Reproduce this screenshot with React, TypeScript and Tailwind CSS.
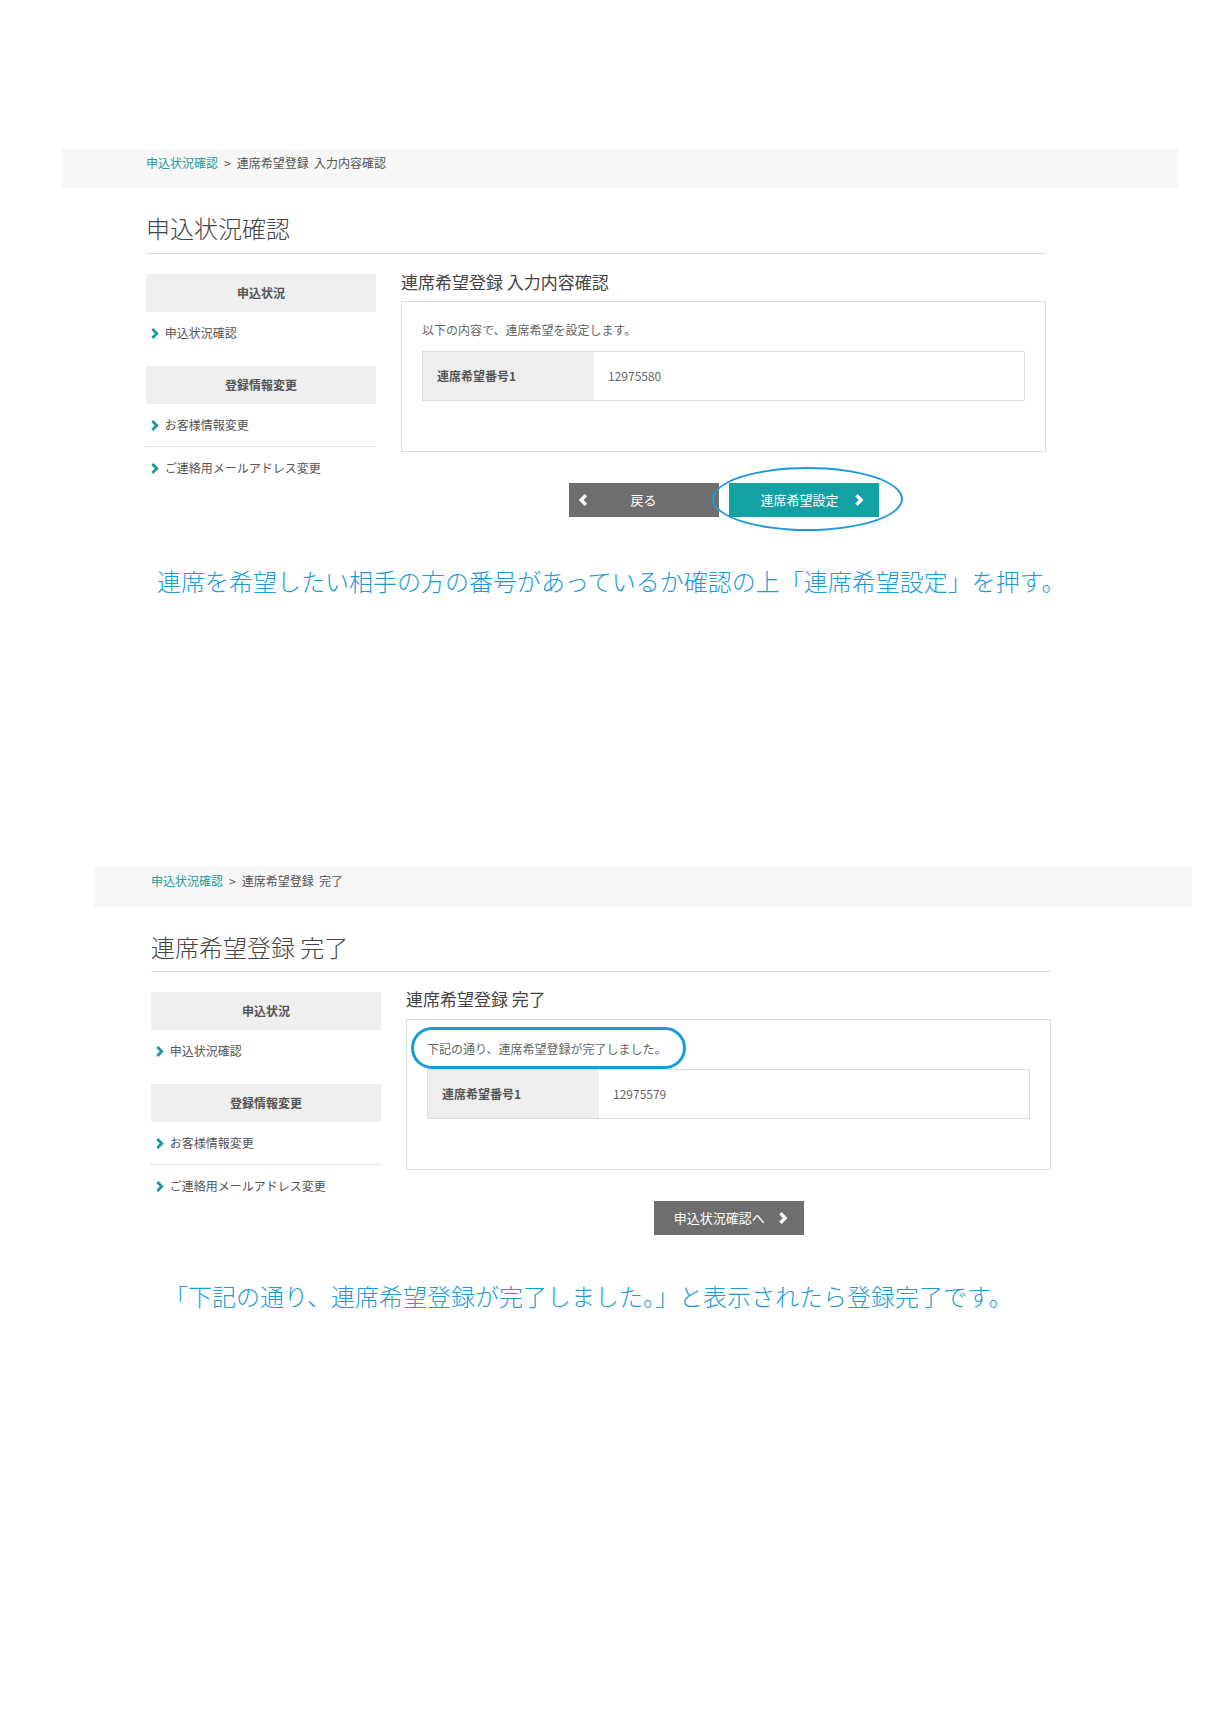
import React from "react";

const FONT = "font-['Noto_Sans_CJK_JP','Noto_Sans',sans-serif]";

function Chevron({ dir = "right", color = "#1a9a9a", size = 10, stroke = 2.4 }: { dir?: "left" | "right"; color?: string; size?: number; stroke?: number }) {
  return (
    <svg width={size * 0.7} height={size} viewBox="0 0 7 10" fill="none">
      {dir === "right" ? (
        <polyline points="1.2,1 5.2,5 1.2,9" stroke={color} strokeWidth={stroke} strokeLinejoin="miter" />
      ) : (
        <polyline points="5.8,1 1.8,5 5.8,9" stroke={color} strokeWidth={stroke} strokeLinejoin="miter" />
      )}
    </svg>
  );
}

function Sidebar() {
  return (
    <div className="w-[230px] shrink-0 pt-[20px] text-[12px] text-[#555]">
      <div className="h-[38px] bg-[#efefef] flex items-center justify-center font-bold text-[#555]">申込状況</div>
      <div className="h-[42px] flex items-center gap-[6px] pl-[5px]">
        <Chevron size={11} stroke={2.6} />
        <span>申込状況確認</span>
      </div>
      <div className="mt-[12px] h-[38px] bg-[#efefef] flex items-center justify-center font-bold text-[#555]">登録情報変更</div>
      <div className="h-[43px] flex items-center gap-[6px] pl-[5px] border-b border-dotted border-[#cfcfcf]">
        <Chevron size={11} stroke={2.6} />
        <span>お客様情報変更</span>
      </div>
      <div className="h-[42px] flex items-center gap-[6px] pl-[5px]">
        <Chevron size={11} stroke={2.6} />
        <span>ご連絡用メールアドレス変更</span>
      </div>
    </div>
  );
}

function InfoTable({ value }: { value: string }) {
  return (
    <div className="flex h-[50px] border border-[#dddddd] text-[12px]">
      <div className="w-[171px] bg-[#eeeeee] flex items-center pl-[14px] font-bold text-[#555]">連席希望番号1</div>
      <div className="flex-1 flex items-center pl-[14px] text-[#666]">{value}</div>
    </div>
  );
}

export default function App() {
  return (
    <div className={`w-[1225px] min-h-[1718px] bg-white ${FONT}`}>
      {/* Section 1 */}
      <div className="pt-[149px]">
        <div className="ml-[62px] w-[1116px] h-[39px] bg-[#f7f7f7] pl-[84px] pt-[5px] text-[12px] leading-[18px] text-[#555]">
          <span className="text-[#259b9b]">申込状況確認</span>
          <span className="mx-[6px]">&gt;</span>
          <span>連席希望登録&nbsp;&nbsp;入力内容確認</span>
        </div>
        <div className="ml-[146px] w-[900px]">
          <div className="mt-[24px] h-[42px] border-b border-[#dddddd] text-[24px] leading-[32px] text-[#444] font-light">申込状況確認</div>
          <div className="flex gap-[25px]">
            <Sidebar />
            <div className="flex-1 pt-[16px]">
              <div className="text-[17px] leading-[24px] text-[#444]">連席希望登録 入力内容確認</div>
              <div className="mt-[7px] border border-[#dddddd] px-[20px] pt-[19px] pb-[50px]">
                <div className="text-[12px] leading-[18px] text-[#666]">以下の内容で、連席希望を設定します。</div>
                <div className="mt-[12px]">
                  <InfoTable value="12975580" />
                </div>
              </div>
              <div className="mt-[31px] flex justify-center gap-[10px] text-[13px] text-white">
                <div className="w-[150px] h-[34px] bg-[#6e6e6e] grid grid-cols-[24px_1fr_24px] items-center">
                  <div className="pl-[10px] flex items-center">
                    <Chevron dir="left" color="#ffffff" size={12} stroke={2.8} />
                  </div>
                  <div className="text-center">戻る</div>
                  <div />
                </div>
                <div className="relative w-[150px] h-[34px] bg-[#14a1a3] grid grid-cols-[20px_1fr_28px] items-center">
                  <div />
                  <div className="text-center">連席希望設定</div>
                  <div className="flex items-center pl-[4px]">
                    <Chevron dir="right" color="#ffffff" size={12} stroke={2.8} />
                  </div>
                  <div className="absolute left-[-17px] top-[-16px] w-[191px] h-[64px] rounded-[50%] border-[2.5px] border-[#1b9ad8]" />
                </div>
              </div>
            </div>
          </div>
          <div className="mt-[48px] pl-[11px] text-[24px] leading-[32px] text-[#1b9ad8] font-light whitespace-nowrap">
            連席を希望したい相手の方の番号があっているか確認の上「連席希望設定」を押す。
          </div>
        </div>
      </div>

      {/* Section 2 */}
      <div className="mt-[269px]">
        <div className="ml-[94px] w-[1098px] h-[41px] bg-[#f7f7f7] pl-[57px] pt-[6px] text-[12px] leading-[18px] text-[#555]">
          <span className="text-[#259b9b]">申込状況確認</span>
          <span className="mx-[6px]">&gt;</span>
          <span>連席希望登録&nbsp;&nbsp;完了</span>
        </div>
        <div className="ml-[151px] w-[900px]">
          <div className="mt-[24px] h-[41px] border-b border-[#dddddd] text-[24px] leading-[32px] text-[#444] font-light">連席希望登録 完了</div>
          <div className="flex gap-[25px]">
            <Sidebar />
            <div className="flex-1 pt-[15px]">
              <div className="text-[17px] leading-[24px] text-[#444]">連席希望登録 完了</div>
              <div className="relative mt-[8px] border border-[#dddddd] px-[20px] pt-[20px] pb-[50px]">
                <div className="text-[12px] leading-[18px] text-[#666]">下記の通り、連席希望登録が完了しました。</div>
                <div className="mt-[11px]">
                  <InfoTable value="12975579" />
                </div>
                <div className="absolute left-[4px] top-[7px] w-[275px] h-[42px] rounded-[22px] border-[3px] border-[#1b9ad8]" />
              </div>
              <div className="mt-[31px] flex justify-center text-[13px] text-white">
                <div className="w-[150px] h-[34px] bg-[#6e6e6e] flex items-center justify-center gap-[14px] pl-[4px]">
                  <span>申込状況確認へ</span>
                  <Chevron dir="right" color="#ffffff" size={12} stroke={2.8} />
                </div>
              </div>
            </div>
          </div>
          <div className="mt-[45px] pl-[13px] text-[24px] leading-[32px] text-[#1b9ad8] font-light whitespace-nowrap">
            「下記の通り、連席希望登録が完了しました。」と表示されたら登録完了です。
          </div>
        </div>
      </div>
    </div>
  );
}
